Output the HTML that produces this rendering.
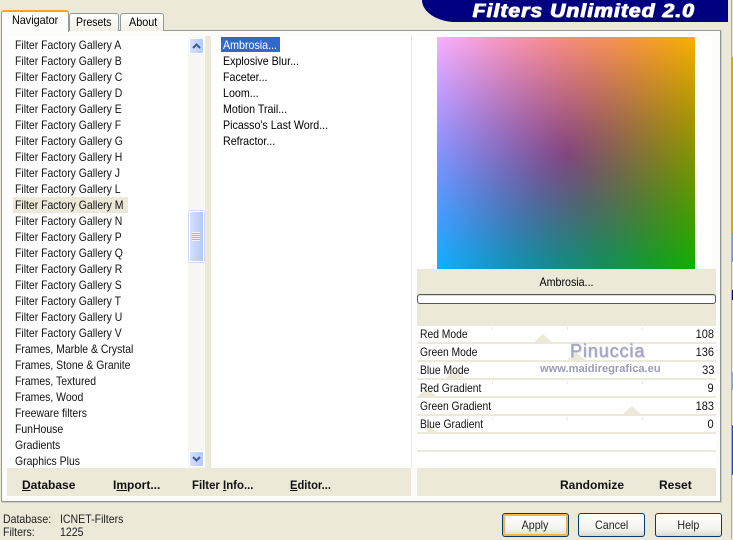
<!DOCTYPE html>
<html><head><meta charset="utf-8">
<style>
*{box-sizing:border-box}
html,body{margin:0;padding:0}
body{width:733px;height:539px;position:relative;overflow:hidden;background:#ece9d8;font-family:"Liberation Sans",sans-serif;font-size:12px;color:#000}
.a{position:absolute}
.t{position:absolute;white-space:nowrap;line-height:16px;height:16px;transform:scaleX(.89);transform-origin:0 50%}
.row{position:absolute;left:15px;white-space:nowrap;line-height:16px;height:16px;transform:scaleX(.87);transform-origin:0 50%;color:#111}
.b{position:absolute;font-weight:bold;font-size:12px;line-height:16px;white-space:nowrap;color:#111}
.b u{text-decoration:underline}
.p{position:absolute;left:417px;width:299px;height:18px;background:#fff;border-bottom:2px solid #ece9d8}
.p span{position:absolute;z-index:2;left:3px;top:1px;line-height:15px;color:#111;white-space:nowrap;transform:scaleX(.86);transform-origin:0 50%}
.p i{position:absolute;z-index:2;right:2px;top:1px;line-height:15px;font-style:normal;color:#111;transform:scaleX(.92);transform-origin:100% 50%}
.tri{position:absolute;width:0;height:0;border-left:10px solid transparent;border-right:10px solid transparent;border-bottom:9px solid #ece9d8}
.tick{position:absolute;width:1px;height:3px;background:#ece9d8}
.btn{position:absolute;top:513px;height:24px;border:1px solid #003c74;border-radius:3px;background:linear-gradient(#fff,#f4f3ee 70%,#dcd8cc);text-align:center;line-height:22px;font-size:12px;color:#222}
.btn span{display:inline-block;transform:scaleX(.89)}
.sb{position:absolute;left:189px;width:15px;border:1px solid #fff;border-radius:2px;background:linear-gradient(90deg,#d5e0fc,#b3c8f8)}
</style></head><body>
<!-- pane -->
<div class="a" style="left:1px;top:30px;width:720px;height:472px;background:#fcfcfa;border:1px solid #919b9c;border-right-color:#8e9596;border-bottom-color:#8e9596;box-shadow:1px 1px 0 #d0cdbf"></div>
<div class="a" style="left:7px;top:36px;width:705px;height:432px;background:#fff"></div>
<!-- tabs -->
<div class="a" style="left:69px;top:13px;width:50px;height:18px;background:linear-gradient(#fff,#f1efe6);border:1px solid #919b9c;border-bottom:0;border-radius:3px 3px 0 0"></div>
<div class="a" style="left:120px;top:13px;width:44px;height:18px;background:linear-gradient(#fff,#f1efe6);border:1px solid #919b9c;border-bottom:0;border-radius:3px 3px 0 0"></div>
<div class="a" style="left:1px;top:10px;width:68px;height:22px;background:#fcfcfa;border:1px solid #919b9c;border-bottom:0;border-top:2px solid #f0a428;border-radius:3px 3px 0 0"></div>
<div class="t" style="left:12px;top:12px;transform:scaleX(.9)">Navigator</div>
<div class="t" style="left:76px;top:14px;transform:scaleX(.87)">Presets</div>
<div class="t" style="left:129px;top:14px;transform:scaleX(.9)">About</div>
<!-- banner -->
<div class="a" style="left:422px;top:0;width:306px;height:22px;background:#000080;border-bottom-left-radius:34px 22px"></div>
<div class="a" style="left:472px;top:0;height:22px;line-height:23px;font-size:19px;font-weight:bold;font-style:italic;color:#fff;white-space:nowrap;letter-spacing:.9px;transform:scaleX(1.115);transform-origin:0 50%;text-shadow:1px 0 0 #fff,1px 1px 0 #8888aa">Filters Unlimited 2.0</div>
<!-- right edge -->
<div class="a" style="left:731px;top:0;width:1px;height:539px;background:#aca899"></div>
<div class="a" style="left:732px;top:0;width:1px;height:539px;background:linear-gradient(#ece9d8 0 57px,#e0a000 57px 233px,#7a9ae0 233px 262px,#ece9d8 262px 290px,#000080 290px 300px,#ece9d8 300px 372px,#8aa6e0 372px 390px,#ece9d8 390px 425px,#2050c0 425px 475px,#ece9d8 475px)"></div>
<!-- left list -->
<div class="a" style="left:13px;top:197px;width:115px;height:16px;background:#ece9d8"></div>
<div class="row" style="top:37px">Filter Factory Gallery A</div>
<div class="row" style="top:53px">Filter Factory Gallery B</div>
<div class="row" style="top:69px">Filter Factory Gallery C</div>
<div class="row" style="top:85px">Filter Factory Gallery D</div>
<div class="row" style="top:101px">Filter Factory Gallery E</div>
<div class="row" style="top:117px">Filter Factory Gallery F</div>
<div class="row" style="top:133px">Filter Factory Gallery G</div>
<div class="row" style="top:149px">Filter Factory Gallery H</div>
<div class="row" style="top:165px">Filter Factory Gallery J</div>
<div class="row" style="top:181px">Filter Factory Gallery L</div>
<div class="row" style="top:197px">Filter Factory Gallery M</div>
<div class="row" style="top:213px">Filter Factory Gallery N</div>
<div class="row" style="top:229px">Filter Factory Gallery P</div>
<div class="row" style="top:245px">Filter Factory Gallery Q</div>
<div class="row" style="top:261px">Filter Factory Gallery R</div>
<div class="row" style="top:277px">Filter Factory Gallery S</div>
<div class="row" style="top:293px">Filter Factory Gallery T</div>
<div class="row" style="top:309px">Filter Factory Gallery U</div>
<div class="row" style="top:325px">Filter Factory Gallery V</div>
<div class="row" style="top:341px">Frames, Marble &amp; Crystal</div>
<div class="row" style="top:357px">Frames, Stone &amp; Granite</div>
<div class="row" style="top:373px">Frames, Textured</div>
<div class="row" style="top:389px">Frames, Wood</div>
<div class="row" style="top:405px">Freeware filters</div>
<div class="row" style="top:421px">FunHouse</div>
<div class="row" style="top:437px">Gradients</div>
<div class="row" style="top:453px">Graphics Plus</div>
<!-- scrollbar -->
<div class="a" style="left:187px;top:37px;width:18px;height:431px;background:#f7f6f0;border-left:1px solid #fff;border-right:1px solid #fff"></div>
<div class="a" style="left:205px;top:36px;width:6px;height:432px;background:#ece9d8"></div>
<div class="sb" style="top:38px;height:16px"></div>
<svg class="a" style="left:189px;top:38px" width="15" height="16"><path d="M4 10L7.5 6.5L11 10" fill="none" stroke="#3a5a9c" stroke-width="2"/></svg>
<div class="sb" style="top:211px;height:51px;border-color:#fff;box-shadow:0 0 0 1px #cfdaf5"></div>
<div class="a" style="left:192px;top:232px;width:8px;height:9px;background:repeating-linear-gradient(#eef3fd 0 1px,#9db5ea 1px 2px)"></div>
<div class="sb" style="top:451px;height:16px"></div>
<svg class="a" style="left:189px;top:451px" width="15" height="16"><path d="M4 6L7.5 9.5L11 6" fill="none" stroke="#3a5a9c" stroke-width="2"/></svg>
<!-- mid list -->
<div class="a" style="left:221px;top:37px;width:59px;height:15px;background:#316ac5"></div>
<div class="t" style="left:223px;top:37px;color:#fff">Ambrosia...</div>
<div class="t" style="left:223px;top:53px">Explosive Blur...</div>
<div class="t" style="left:223px;top:69px">Faceter...</div>
<div class="t" style="left:223px;top:85px">Loom...</div>
<div class="t" style="left:223px;top:101px">Motion Trail...</div>
<div class="t" style="left:223px;top:117px">Picasso's Last Word...</div>
<div class="t" style="left:223px;top:133px">Refractor...</div>
<div class="a" style="left:411px;top:36px;width:1px;height:432px;background:#ece9d8"></div>
<!-- bottom bars -->
<div class="a" style="left:7px;top:468px;width:404px;height:28px;background:#ece9d8"></div>
<div class="a" style="left:417px;top:468px;width:299px;height:28px;background:#ece9d8"></div>
<div class="b" style="left:22px;top:477px"><u>D</u>atabase</div>
<div class="b" style="left:113px;top:477px">I<u>m</u>port...</div>
<div class="b" style="left:192px;top:477px;transform:scaleX(.95);transform-origin:0 50%">Filter <u>I</u>nfo...</div>
<div class="b" style="left:290px;top:477px;transform:scaleX(.93);transform-origin:0 50%"><u>E</u>ditor...</div>
<div class="b" style="left:560px;top:477px">Randomize</div>
<div class="b" style="left:659px;top:477px">Reset</div>
<!-- preview -->
<div class="a" style="left:437px;top:37px;width:258px;height:232px;background-image:linear-gradient(#f80000,#100000),linear-gradient(90deg,#0000ff,#000000),radial-gradient(circle farthest-corner at 50% 50%,#004600,#00b000);background-blend-mode:lighten"></div>
<div class="a" style="left:417px;top:269px;width:299px;height:57px;background:#ece9d8"></div>
<div class="t" style="left:417px;top:274px;width:299px;text-align:center;transform-origin:50% 50%;transform:scaleX(.89)">Ambrosia...</div>
<div class="a" style="left:417px;top:294px;width:299px;height:10px;background:#fff;border:1px solid #555;border-radius:3px;box-shadow:inset 0 1px 0 #ddd"></div>
<!-- params -->
<div class="p" style="top:326px"><span>Red Mode</span><i>108</i></div>
<div class="p" style="top:344px"><span>Green Mode</span><i>136</i></div>
<div class="p" style="top:362px"><span>Blue Mode</span><i>33</i></div>
<div class="p" style="top:380px"><span>Red Gradient</span><i>9</i></div>
<div class="p" style="top:398px"><span>Green Gradient</span><i>183</i></div>
<div class="p" style="top:416px"><span>Blue Gradient</span><i>0</i></div>
<div class="p" style="top:434px"></div>
<div class="p" style="top:452px;height:16px;border:0"></div>
<div class="tri" style="left:533px;top:334px"></div>
<div class="tri" style="left:566px;top:352px"></div>
<div class="tri" style="left:445px;top:370px"></div>
<div class="tri" style="left:417px;top:388px"></div>
<div class="tri" style="left:622px;top:406px"></div>
<div class="tri" style="left:417px;top:424px;clip-path:inset(0 0 0 10px)"></div>
<div class="tick" style="left:567px;top:327px"></div><div class="tick" style="left:642px;top:327px"></div><div class="tick" style="left:492px;top:327px"></div>
<div class="tick" style="left:567px;top:381px"></div><div class="tick" style="left:642px;top:381px"></div><div class="tick" style="left:492px;top:381px"></div>
<div class="tick" style="left:567px;top:417px"></div><div class="tick" style="left:642px;top:417px"></div><div class="tick" style="left:492px;top:417px"></div>
<!-- watermark -->
<div class="a" style="z-index:3;left:570px;top:341px;font-size:18px;line-height:20px;color:#a5a5c6;white-space:nowrap;letter-spacing:.9px;-webkit-text-stroke:.4px #a5a5c6;text-shadow:1px 1px 0 #dcdce8">Pinuccia</div>
<div class="a" style="z-index:3;left:540px;top:362px;font-size:11px;line-height:14px;font-weight:bold;color:#9c9cb8;white-space:nowrap;transform:scaleX(1.01);transform-origin:0 50%">www.maidiregrafica.eu</div>
<!-- status -->
<div class="t" style="left:3px;top:511px;color:#222;transform:scaleX(.88)">Database:</div>
<div class="t" style="left:60px;top:511px;color:#222;transform:scaleX(.88)">ICNET-Filters</div>
<div class="t" style="left:3px;top:524px;color:#222;transform:scaleX(.88)">Filters:</div>
<div class="t" style="left:60px;top:524px;color:#222;transform:scaleX(.88)">1225</div>
<!-- buttons -->
<div class="btn" style="left:502px;width:67px;box-shadow:inset 0 0 0 2px #f5b642"><span>Apply</span></div>
<div class="btn" style="left:578px;width:67px"><span>Cancel</span></div>
<div class="btn" style="left:655px;width:67px"><span>Help</span></div>
</body></html>
